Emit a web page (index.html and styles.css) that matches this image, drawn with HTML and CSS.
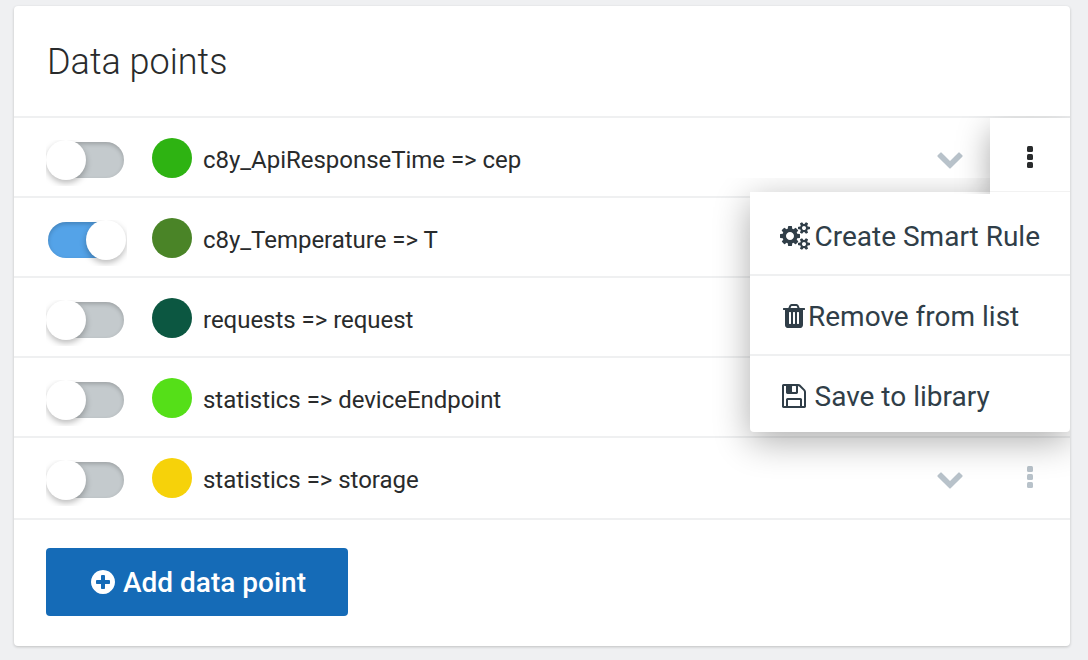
FILE: index.html
```
<!DOCTYPE html>
<html lang="en">
<head>
<meta charset="utf-8">
<title>Data points</title>
<link rel="stylesheet" href="styles.css">
</head>
<body>
<svg class="sprite" width="0" height="0" aria-hidden="true">
  <symbol id="chevron" viewBox="0 0 1792 1792"><path d="M1683 808l-742 741q-19 19-45 19t-45-19l-742-741q-19-19-19-45.5t19-45.5l166-165q19-19 45-19t45 19l531 531 531-531q19-19 45-19t45 19l166 165q19 19 19 45.5t-19 45.5z"/></symbol>
  <symbol id="dots" viewBox="0 0 6 22"><rect width="6" height="6" rx="1.5"/><rect y="8" width="6" height="6" rx="1.5"/><rect y="16" width="6" height="6" rx="1.5"/></symbol>
  <symbol id="cogs" viewBox="0 0 1920 1792"><path d="M896 896q0-106-75-181t-181-75-181 75-75 181 75 181 181 75 181-75 75-181zm768 512q0-52-38-90t-90-38-90 38-38 90q0 53 37.5 90.5t90.5 37.5 90.5-37.5 37.5-90.5zm0-1024q0-52-38-90t-90-38-90 38-38 90q0 53 37.5 90.5t90.5 37.5 90.5-37.5 37.5-90.5zm-384 421v185q0 10-7 19.5t-16 10.5l-155 24q-11 35-32 76 34 48 90 115 7 11 7 20 0 12-7 19-23 30-82.5 89.5t-78.5 59.5q-11 0-21-7l-115-90q-37 19-77 31-11 108-23 155-7 24-30 24h-186q-11 0-20-7.5t-10-17.5l-23-153q-34-10-75-31l-118 89q-7 7-20 7-11 0-21-8-144-133-144-160 0-9 7-19 10-14 41-53t47-61q-23-44-35-82l-152-24q-10-1-17-9.5t-7-19.5v-185q0-10 7-19.5t16-10.5l155-24q11-35 32-76-34-48-90-115-7-11-7-20 0-12 7-20 22-30 82-89t79-59q11 0 21 7l115 90q34-18 77-32 11-108 23-154 7-24 30-24h186q11 0 20 7.5t10 17.5l23 153q34 10 75 31l118-89q8-7 20-7 11 0 21 8 144 133 144 160 0 8-7 19-12 16-42 54t-45 60q23 48 34 82l152 23q10 2 17 10.5t7 19.5zm640 533v140q0 16-149 31-12 27-30 52 51 113 51 138 0 4-4 7-122 71-124 71-8 0-46-47t-52-68q-20 2-30 2t-30-2q-14 21-52 68t-46 47q-2 0-124-71-4-3-4-7 0-25 51-138-18-25-30-52-149-15-149-31v-140q0-16 149-31 13-29 30-52-51-113-51-138 0-4 4-7 4-2 35-20t59-34 30-16q8 0 46 46.5t52 67.5q20-2 30-2t30 2q51-71 92-112l6-2q4 0 124 70 4 3 4 7 0 25-51 138 17 23 30 52 149 15 149 31zm0-1024v140q0 16-149 31-12 27-30 52 51 113 51 138 0 4-4 7-122 71-124 71-8 0-46-47t-52-68q-20 2-30 2t-30-2q-14 21-52 68t-46 47q-2 0-124-71-4-3-4-7 0-25 51-138-18-25-30-52-149-15-149-31v-140q0-16 149-31 13-29 30-52-51-113-51-138 0-4 4-7 4-2 35-20t59-34 30-16q8 0 46 46.5t52 67.5q20-2 30-2t30 2q51-71 92-112l6-2q4 0 124 70 4 3 4 7 0 25-51 138 17 23 30 52 149 15 149 31z"/></symbol>
  <symbol id="trash" viewBox="0 0 1792 1792"><path d="M704 1376v-704q0-14-9-23t-23-9h-64q-14 0-23 9t-9 23v704q0 14 9 23t23 9h64q14 0 23-9t9-23zm256 0v-704q0-14-9-23t-23-9h-64q-14 0-23 9t-9 23v704q0 14 9 23t23 9h64q14 0 23-9t9-23zm256 0v-704q0-14-9-23t-23-9h-64q-14 0-23 9t-9 23v704q0 14 9 23t23 9h64q14 0 23-9t9-23zm-544-992h448l-48-117q-7-9-17-11h-317q-10 2-17 11zm928 32v64q0 14-9 23t-23 9h-96v948q0 83-47 143.5t-113 60.5h-832q-66 0-113-58.5t-47-141.5v-952h-96q-14 0-23-9t-9-23v-64q0-14 9-23t23-9h309l70-167q15-37 54-63t79-26h320q40 0 79 26t54 63l70 167h309q14 0 23 9t9 23z"/></symbol>
  <symbol id="floppy" viewBox="0 0 1792 1792"><path d="M512 1536h768v-384h-768v384zm896 0h128v-896q0-14-10-38.5t-20-34.5l-281-281q-10-10-34-20t-39-10v416q0 40-28 68t-68 28h-576q-40 0-68-28t-28-68v-416h-128v1280h128v-416q0-40 28-68t68-28h832q40 0 68 28t28 68v416zm-384-928v-320q0-13-9.5-22.5t-22.5-9.5h-192q-13 0-22.5 9.5t-9.5 22.5v320q0 13 9.5 22.5t22.5 9.5h192q13 0 22.5-9.5t9.5-22.5zm640 32v928q0 40-28 68t-68 28h-1344q-40 0-68-28t-28-68v-1344q0-40 28-68t68-28h928q40 0 88 20t76 48l280 280q28 28 48 76t20 88z"/></symbol>
  <symbol id="plus" viewBox="0 0 1792 1792"><path d="M1344 960v-128q0-26-19-45t-45-19h-256v-256q0-26-19-45t-45-19h-128q-26 0-45 19t-19 45v256h-256q-26 0-45 19t-19 45v128q0 26 19 45t45 19h256v256q0 26 19 45t45 19h128q26 0 45-19t19-45v-256h256q26 0 45-19t19-45zm320-64q0 209-103 385.5t-279.5 279.5-385.5 103-385.5-103-279.5-279.5-103-385.5 103-385.5 279.5-279.5 385.5-103 385.5 103 279.5 279.5 103 385.5z"/></symbol>
</svg>
<main class="card">
  <header class="card-header"><h1 class="title">Data points</h1></header>
  <ul class="list">
    <li class="row">
      <span class="toggle"></span><span class="swatch green"></span><span class="name">c8y_ApiResponseTime =&gt; cep</span>
      <svg class="chevron"><use href="#chevron"/></svg>
      <div class="actions open">
        <button class="more"><svg class="dots"><use href="#dots"/></svg></button>
        <ul class="menu">
          <li class="menu-item"><svg class="icon cogs"><use href="#cogs"/></svg><span class="label-create">Create Smart Rule</span></li>
          <li class="menu-item"><svg class="icon"><use href="#trash"/></svg><span class="label-remove">Remove from list</span></li>
          <li class="menu-item"><svg class="icon"><use href="#floppy"/></svg><span class="label-save">Save to library</span></li>
        </ul>
      </div>
    </li>
    <li class="row"><span class="toggle on"></span><span class="swatch olive"></span><span class="name">c8y_Temperature =&gt; T</span></li>
    <li class="row"><span class="toggle"></span><span class="swatch teal"></span><span class="name">requests =&gt; request</span></li>
    <li class="row"><span class="toggle"></span><span class="swatch lime"></span><span class="name">statistics =&gt; deviceEndpoint</span></li>
    <li class="row">
      <span class="toggle"></span><span class="swatch yellow"></span><span class="name">statistics =&gt; storage</span>
      <svg class="chevron"><use href="#chevron"/></svg>
      <div class="actions"><button class="more"><svg class="dots"><use href="#dots"/></svg></button></div>
    </li>
  </ul>
  <footer class="card-footer"><button class="add"><svg class="icon"><use href="#plus"/></svg><span class="label-add">Add data point</span></button></footer>
</main>
</body>
</html>
```
FILE: styles.css
```
* { box-sizing: border-box; }
body {
  margin: 0;
  padding: 6px 18px 14px 14px;
  height: 660px;
  background: #eff0f2;
  font-family: Roboto, sans-serif;
  color: #292b2c;
  overflow: hidden;
}
ul { list-style: none; margin: 0; padding: 0; }
button { border: 0; padding: 0; margin: 0; font: inherit; }
svg { display: block; fill: currentColor; flex: none; }
.sprite { position: absolute; }

.card {
  height: 640px;
  background: #fff;
  border-radius: 4px;
  box-shadow: 0 1px 3px rgba(0, 0, 0, .2);
}
.card-header {
  height: 112px;
  padding: 0 33px;
  border-bottom: 2px solid #eff0f1;
}
.title {
  margin: 0;
  font-size: 36px;
  font-weight: 300;
  line-height: 113px;
  height: 110px;
}

.row {
  display: flex;
  align-items: flex-start;
  height: 80px;
  padding-left: 34px;
  border-bottom: 2px solid #eff0f1;
}
.row:last-child { height: 82px; }
.toggle {
  position: relative;
  flex: none;
  width: 76px;
  height: 36px;
  margin-top: 24px;
  border-radius: 18px;
  background: #c4cacd;
  box-shadow: inset 0 2px 4px rgba(0, 0, 0, .2);
}
.toggle::after {
  content: "";
  position: absolute;
  left: -2px;
  top: -2px;
  width: 40px;
  height: 40px;
  border-radius: 50%;
  background: #fff;
  box-shadow: 0 3px 6px rgba(0, 0, 0, .27);
  clip-path: inset(0 -8px -6px 0);
}
.toggle.on { background: #54a3e8; }
.toggle.on::after { left: 38px; clip-path: inset(0 -1px -6px -8px); }
.swatch {
  flex: none;
  width: 40px;
  height: 40px;
  margin: 20px 11px 0 28px;
  border-radius: 50%;
}
.green { background: #2eb312; }
.olive { background: #4a8427; }
.teal { background: #0c5741; }
.lime { background: #55df18; }
.yellow { background: #f6d20a; }
.name {
  flex: 1;
  height: 78px;
  font-size: 24px;
  line-height: 85px;
  letter-spacing: -.03px;
  white-space: nowrap;
}
.chevron { width: 28px; height: 28px; margin: 26px 26px 0 0; color: #b8c2ca; }

.actions { position: relative; width: 80px; height: 76px; }
.more {
  display: flex;
  justify-content: center;
  width: 80px;
  height: 76px;
  padding-top: 28px;
  background: none;
  color: #b8c2ca;
}
.dots { width: 6px; height: 22px; }
.open .more {
  position: relative;
  z-index: 2;
  background: #fff linear-gradient(#f2f2f2, #f2f2f2) 0 73px / 100% 1px no-repeat;
  color: #292b2c;
  box-shadow: 0 12px 32px rgba(0, 0, 0, .34);
  clip-path: inset(-2px 0 0 -40px);
}
.menu {
  position: absolute;
  z-index: 1;
  top: 74px;
  right: 0;
  width: 320px;
  height: 240px;
  padding-top: 4px;
  background: #fff;
  border-radius: 0 0 4px 4px;
  box-shadow: 0 9px 36px rgba(0, 0, 0, .33);
  clip-path: inset(-14px 0 -50px -50px);
}
.menu-item {
  display: flex;
  align-items: flex-start;
  height: 80px;
  padding: 26px 0 0 30px;
  border-bottom: 2px solid #eff0f1;
  color: #303e48;
  font-size: 28px;
  line-height: 30px;
  white-space: nowrap;
}
.menu-item:last-child { height: 76px; border: 0; }
.icon { width: 28px; height: 28px; }
.cogs { width: 30px; }
.label-create { margin-left: 4.5px; }
.label-save { margin-left: 6.5px; }

.card-footer { padding: 28px 32px; }
.add {
  display: flex;
  align-items: flex-start;
  width: 302px;
  height: 68px;
  padding: 20px 0 0 42.5px;
  border-radius: 4px;
  background: #156bb7;
  color: #fff;
  font-size: 28px;
  font-weight: 500;
  line-height: 30px;
}
.label-add { margin-left: 6.5px; }
```
